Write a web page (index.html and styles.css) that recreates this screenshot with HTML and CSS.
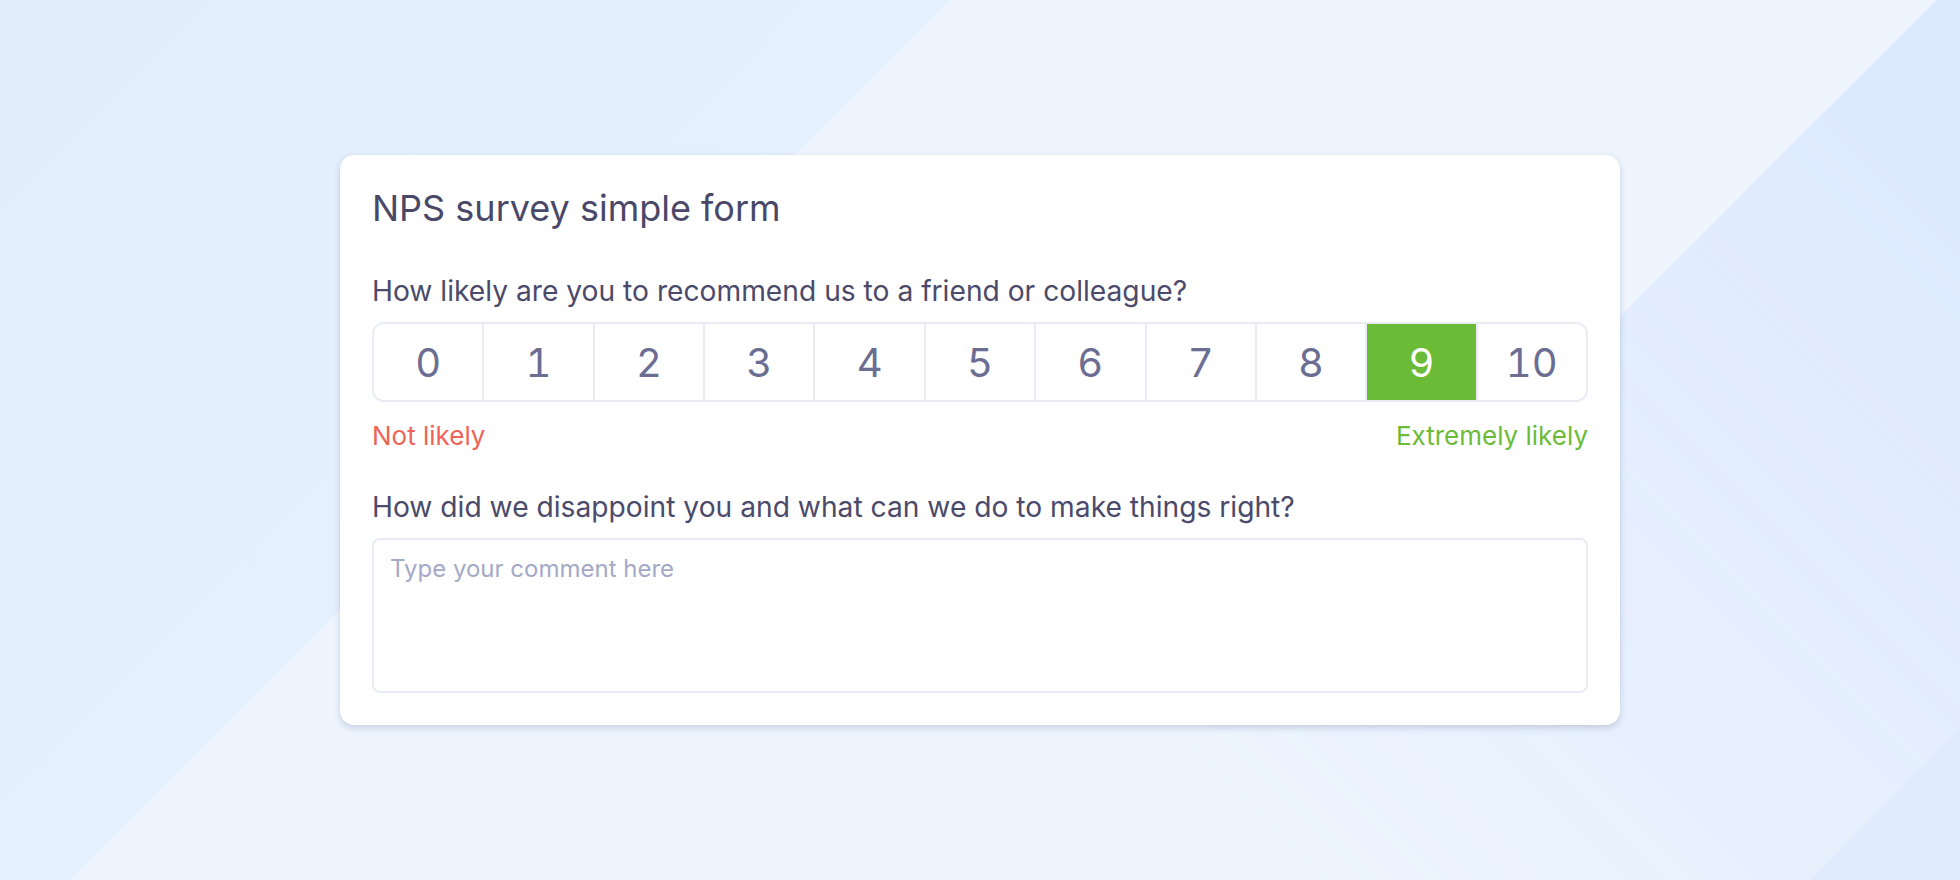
FILE: index.html
```html
<!DOCTYPE html>
<html lang="en">
<head>
<meta charset="utf-8">
<title>NPS survey simple form</title>
<link rel="stylesheet" href="styles.css">
</head>
<body>
<main class="stage">
  <section class="card">
    <h1 class="card-title">NPS survey simple form</h1>
    <p class="question">How likely are you to recommend us to a friend or colleague?</p>
    <div class="scale">
      <button class="score">0</button>
      <button class="score">1</button>
      <button class="score">2</button>
      <button class="score">3</button>
      <button class="score">4</button>
      <button class="score">5</button>
      <button class="score">6</button>
      <button class="score">7</button>
      <button class="score">8</button>
      <button class="score score-active">9</button>
      <button class="score">10</button>
    </div>
    <div class="scale-labels">
      <span class="label-low">Not likely</span>
      <span class="label-high">Extremely likely</span>
    </div>
    <p class="question question-second">How did we disappoint you and what can we do to make things right?</p>
    <textarea class="comment" placeholder="Type your comment here"></textarea>
  </section>
</main>
</body>
</html>
```

FILE: styles.css
```css
* { box-sizing: border-box; }

html, body {
  margin: 0;
  padding: 0;
}

body {
  font-family: Inter, "Noto Sans", "Liberation Sans", sans-serif;
  background:
    linear-gradient(135deg, transparent 94.7%, #dfeafc 94.7%),
    linear-gradient(135deg, #e3eefd 0%, #e5f0fd 33.45%, transparent 33.45%),
    #eef5fe;
}

.stage {
  position: relative;
  width: 1960px;
  height: 880px;
  display: flex;
  align-items: center;
  justify-content: center;
  isolation: isolate;
}

/* decorative diagonal band on the right, fading toward the bottom-left */
.stage::before {
  content: "";
  position: absolute;
  inset: 0;
  z-index: -1;
  background: linear-gradient(135deg, transparent 68.2%, #dde9fd 68.2%, #dde9fd 94.7%, transparent 94.7%);
  -webkit-mask-image: linear-gradient(45deg, transparent 46%, #000 92%);
  mask-image: linear-gradient(45deg, transparent 46%, #000 92%);
}

.card {
  width: 1280px;
  background: #ffffff;
  border-radius: 14px;
  padding: 32px;
  box-shadow: 0 3px 7px rgba(60, 80, 130, 0.22), 0 0 1px rgba(60, 80, 130, 0.15);
  display: flex;
  flex-direction: column;
}

.card-title {
  margin: 0;
  font-size: 36px;
  line-height: 42px;
  font-weight: 400;
  color: #4a4868;
}

.question {
  margin: 44px 0 0;
  font-size: 28.2px;
  line-height: 36px;
  font-weight: 400;
  color: #4b4a6a;
}

.question-second {
  margin-top: 36px;
}

.scale {
  margin-top: 13px;
  display: flex;
  height: 80px;
  border: 2px solid #e8ebf4;
  border-radius: 12px;
  overflow: hidden;
}

.score {
  flex: 1 1 0;
  border: none;
  border-left: 2px solid #e8ebf4;
  background: #ffffff;
  font-family: inherit;
  font-size: 40px;
  font-weight: 400;
  font-variant-numeric: tabular-nums;
  color: #6b6d92;
  padding: 0;
  margin: 0;
  display: flex;
  align-items: center;
  justify-content: center;
}

.score:first-child {
  border-left: none;
}

.score-active {
  background: #6bbb37;
  color: #ffffff;
}

.scale-labels {
  margin-top: 17px;
  display: flex;
  justify-content: space-between;
  font-size: 26px;
  line-height: 34px;
}

.label-low {
  color: #ee6458;
}

.label-high {
  color: #6cbb38;
}

.comment {
  margin-top: 13px;
  height: 155px;
  width: 100%;
  resize: none;
  border: 2px solid #e8ebf4;
  border-radius: 8px;
  padding: 13px 16px;
  font-family: inherit;
  font-size: 24px;
  line-height: 32px;
  color: #4b4a6a;
  background: #ffffff;
  outline: none;
}

.comment::placeholder {
  color: #a4a9c7;
}
```
